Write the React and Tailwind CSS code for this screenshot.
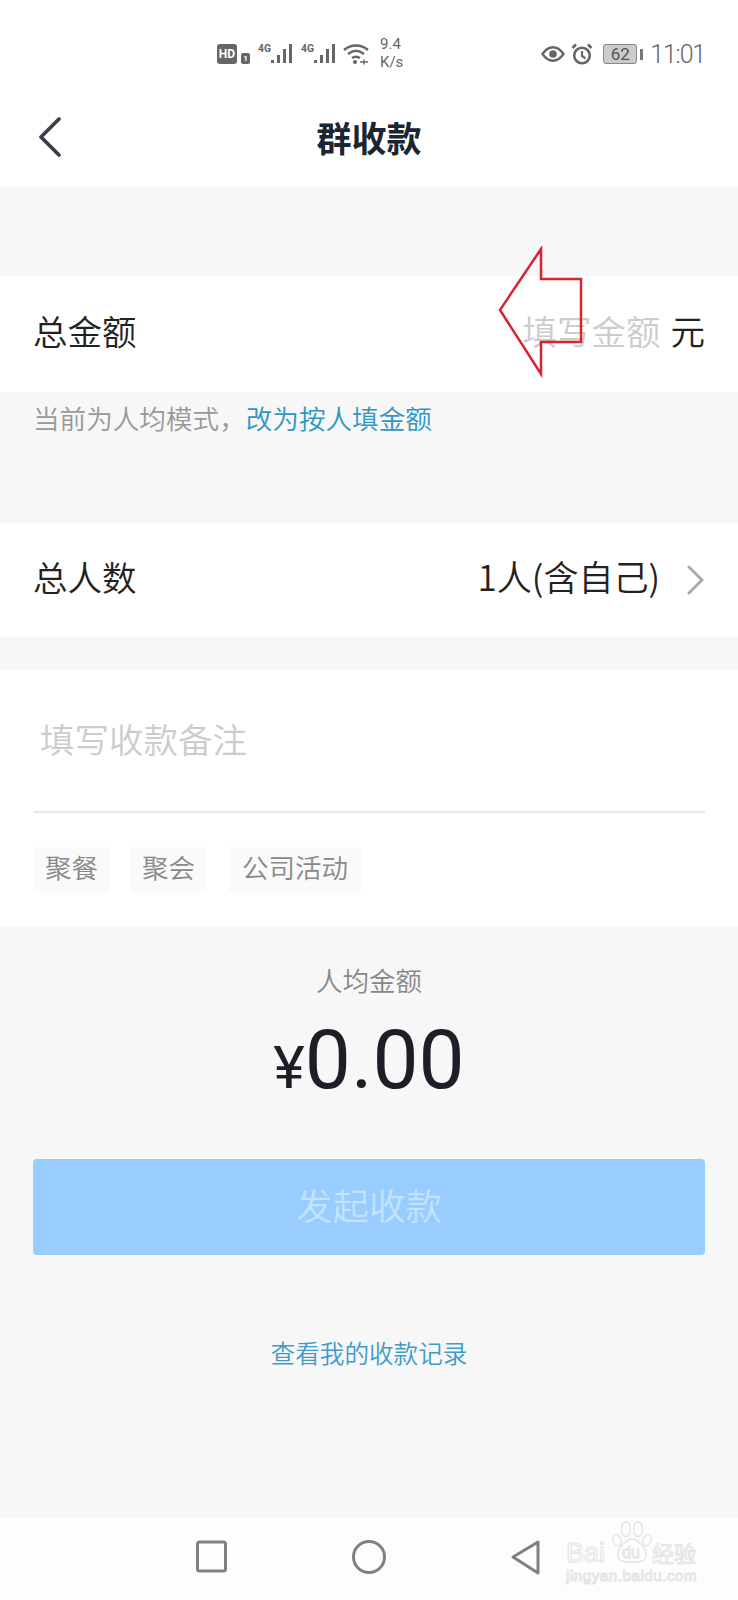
import React from 'react';

const cjk = 'font-["Noto_Sans_CJK_SC","Noto_Sans",sans-serif]';

const Bars = () => (
  <svg width="36" height="22" viewBox="0 0 36 22" className="text-[#666]">
    <text x="0" y="9" fontSize="10" fontWeight="700" fill="currentColor" fontFamily="Roboto" textLength="13" lengthAdjust="spacingAndGlyphs">4G</text>
    <rect x="13" y="17" width="3" height="3" fill="currentColor" />
    <rect x="19" y="12" width="3" height="8" fill="currentColor" />
    <rect x="25" y="6" width="3" height="14" fill="currentColor" />
    <rect x="31" y="1" width="3" height="19" fill="currentColor" />
  </svg>
);

const StatusBar = () => (
  <div className="h-[94px] flex items-center pl-[217px] pr-[33px] pt-[14px] text-[#666] font-['Roboto',sans-serif] font-normal">
    <div className="h-[20px] w-[20px] rounded-[3px] bg-[#666] text-white text-[12px] font-bold leading-[20px] text-center">HD</div>
    <div className="ml-[4px] mt-[9px] h-[11px] w-[9px] rounded-[2px] bg-[#666] text-white text-[8px] font-bold leading-[11px] text-center">1</div>
    <div className="ml-[8px]"><Bars /></div>
    <div className="ml-[7px]"><Bars /></div>
    <svg width="26" height="21" viewBox="0 0 26 21" fill="none" stroke="currentColor" strokeWidth="2.4" className="ml-[6px]">
      <path d="M1 6c7-6 17-6 24 0" />
      <path d="M5 10c5-4 11-4 16 0" />
      <path d="M9 14c3-2 5-2 8 0" />
      <circle cx="12" cy="18" r="2" fill="currentColor" stroke="none" />
      <path d="M17 18h8M21 15.500v5" strokeWidth="1.400" />
    </svg>
    <div className="ml-[11px] mt-[-2px] w-[28px] text-[15px] leading-[18px]">
      <div>9.4</div>
      <div>K/s</div>
    </div>
    <div className="flex-1" />
    <svg width="24" height="16" viewBox="0 0 24 16" fill="none" stroke="currentColor" strokeWidth="2.400">
      <path d="M1.500 8C5 3 8.500 1.300 12 1.300S19 3 22.500 8C19 13 15.500 14.700 12 14.700S5 13 1.500 8Z" />
      <circle cx="12" cy="8" r="3.800" fill="currentColor" stroke="none" />
    </svg>
    <svg width="22" height="22" viewBox="0 0 22 22" fill="none" stroke="currentColor" strokeWidth="2.600" className="ml-[6px]">
      <circle cx="11" cy="12.500" r="7.800" />
      <path d="M11 8v5l3.500 2.500" strokeWidth="2.200" />
      <path d="M1.500 5l3.500-3.500M20.500 5L17 1.500" />
    </svg>
    <div className="ml-[10px] h-[20px] w-[34px] rounded-[3px] border border-[#888] bg-[#ccc] text-[#555] text-[17px] leading-[18px] text-center">62</div>
    <div className="ml-[3px] h-[11px] w-[3px] bg-[#777]" />
    <div className="ml-[7px] text-[25px] leading-none font-light tracking-[-1.200px]">11:01</div>
  </div>
);

const Watermark = () => (
  <div className="absolute left-[566px] top-[1520px] w-[134px] h-[66px] text-white [-webkit-text-stroke:1px_#e3e3e3] font-['Liberation_Sans',sans-serif] font-normal">
    <svg width="42" height="44" viewBox="0 0 42 44" fill="none" stroke="#e3e3e3" strokeWidth="1.400" className="absolute left-[45px] top-0">
      <ellipse cx="6" cy="20" rx="4" ry="6" transform="rotate(-20 6 20)" />
      <ellipse cx="15" cy="9" rx="4.500" ry="7.500" />
      <ellipse cx="27" cy="9" rx="4.500" ry="7.500" />
      <ellipse cx="36" cy="20" rx="4" ry="6" transform="rotate(20 36 20)" />
      <path d="M21 19c-6 0-15 10-14 17 1 6 7 6 14 6s13 0 14-6c1-7-8-17-14-17Z" />
    </svg>
    <div className="absolute left-0 top-[20px] text-[27px] leading-none">Bai</div>
    <div className="absolute left-[56px] top-[25px] text-[16px] leading-none">du</div>
    <div className={`absolute left-[86px] top-[21px] text-[22px] leading-none ${cjk}`}>经验</div>
    <div className="absolute left-0 top-[48px] text-[15px] leading-none tracking-[0.6px]">jingyan.baidu.com</div>
  </div>
);

const App = () => {
  return (
    <div className={`relative w-[738px] h-[1600px] overflow-hidden bg-[#f7f7f7] font-[350] ${cjk}`}>
      {/* header */}
      <div className="bg-white h-[187px]">
        <StatusBar />
        <div className="h-[93px] relative flex items-center justify-center pb-[8px]">
          <svg width="24" height="42" viewBox="0 0 24 42" fill="none" stroke="#3a4148" strokeWidth="3.800" strokeLinecap="round" strokeLinejoin="round" className="absolute left-[38px] top-[22px]">
            <path d="M21 3 3 21l18 18" />
          </svg>
          <h1 className="text-[35px] font-bold leading-none text-[#1c2630]">群收款</h1>
        </div>
      </div>

      {/* total amount */}
      <div className="mt-[89px] h-[116px] bg-white pl-[33px] pr-[33px] pb-[7px] flex items-center justify-between">
        <span className="text-[34.500px] text-[#222]">总金额</span>
        <div className="flex items-center">
          <span className="text-[34.500px] text-[#ccc]">填写金额</span>
          <span className="ml-[10px] text-[34.500px] text-[#222]">元</span>
        </div>
      </div>
      <div className="h-[56px] px-[33px] pb-[4px] flex items-center text-[26.600px] leading-none text-[#999]">
        当前为人均模式，<span className="text-[#2f96c4]">改为按人填金额</span>
      </div>

      {/* people */}
      <div className="mt-[75px] h-[114px] bg-white pl-[33px] pr-[34px] pb-[7px] flex items-center justify-between">
        <span className="text-[34.500px] text-[#222]">总人数</span>
        <div className="flex items-center">
          <span className="text-[35px] text-[#222]">1人(含自己)</span>
          <svg width="17" height="30" viewBox="0 0 17 30" fill="none" stroke="#aaa" strokeWidth="3" strokeLinecap="round" strokeLinejoin="round" className="ml-[27px] mt-[7px]">
            <path d="M2 2l13 13L2 28" />
          </svg>
        </div>
      </div>

      {/* remark */}
      <div className="mt-[33px] h-[256px] bg-white px-[33px]">
        <div className="h-[143px] border-b-2 border-[#e8e8e8] pl-[7px] pt-[42px] text-[34.500px] leading-[52px] text-[#ccc]">填写收款备注</div>
        <div className="mt-[34px] flex text-[26.500px] text-[#888]">
          <span className="h-[45px] px-[12px] bg-[#fafafa] leading-[40px]">聚餐</span>
          <span className="ml-[20px] h-[45px] px-[12px] bg-[#fafafa] leading-[40px]">聚会</span>
          <span className="ml-[22px] h-[45px] px-[13px] bg-[#fafafa] leading-[40px]">公司活动</span>
        </div>
      </div>

      {/* per person */}
      <div className="mt-[41px] text-center text-[26.500px] leading-[26px] text-[#888]">人均金额</div>
      <div className="mt-[27px] flex items-baseline justify-center text-[#1c2026] font-['Roboto',sans-serif] font-normal">
        <span className="text-[60px] leading-[80px]">¥</span>
        <span className="text-[82px] leading-[80px]">0.00</span>
      </div>

      <div className="mt-[51px] mx-[33px] h-[96px] pb-[4px] rounded-[4px] bg-[#99ccff] flex items-center justify-center text-[36.500px] text-white/45">发起收款</div>
      <div className="mt-[85px] text-center text-[24.600px] leading-[25px] text-[#3f9bc9]">查看我的收款记录</div>

      {/* nav bar */}
      <div className="absolute left-0 right-0 bottom-0 h-[82px] bg-[#fdfdfd] text-[#808080]">
        <svg width="738" height="82" viewBox="0 0 738 82" fill="none" stroke="currentColor" strokeWidth="3">
          <rect x="197.500" y="24" width="28" height="29" rx="2" />
          <circle cx="369" cy="39" r="15.500" />
          <path d="M538 24v31L513 39Z" strokeLinejoin="round" />
        </svg>
      </div>
      <Watermark />

      {/* annotation arrow */}
      <svg width="92" height="132" viewBox="0 0 92 132" fill="none" stroke="#d9232e" strokeWidth="2.500" className="absolute left-[495px] top-[246px]">
        <path d="M46 3 5 64l41 64V96H86V33H46Z" />
      </svg>
    </div>
  );
};

export default App;
